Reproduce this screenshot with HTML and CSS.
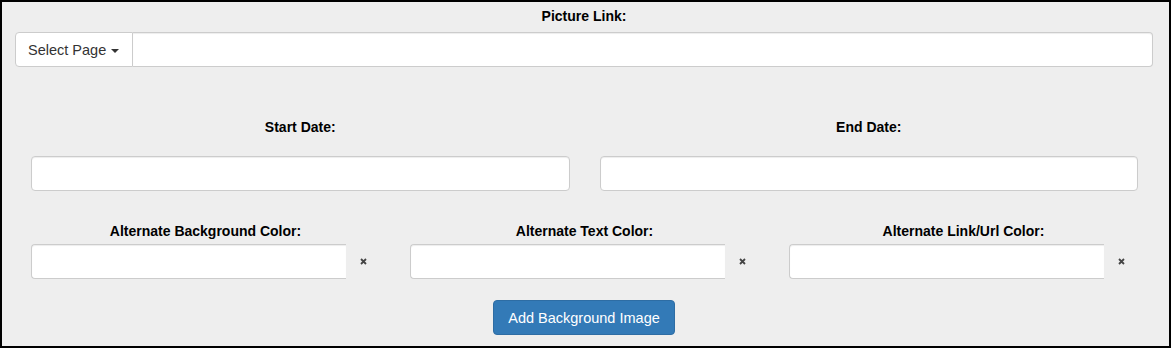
FILE: index.html
```html
<!DOCTYPE html>
<html lang="en">
<head>
    <meta charset="UTF-8">
    <title>Background Settings</title>
    <link rel="stylesheet" href="styles.css">
</head>
<body>
    <div class="panel">
        <div class="form-group top-group">
            <label class="field-label">Picture Link:</label>
            <div class="input-group">
                <button type="button" class="dropdown-btn">Select Page <span class="caret"></span></button>
                <input type="text" class="form-control joined">
            </div>
        </div>

        <div class="row two-cols dates">
            <div class="col">
                <label class="field-label">Start Date:</label>
                <input type="text" class="form-control">
            </div>
            <div class="col">
                <label class="field-label">End Date:</label>
                <input type="text" class="form-control">
            </div>
        </div>

        <div class="row three-cols colors">
            <div class="col">
                <label class="field-label small-gap">Alternate Background Color:</label>
                <div class="input-group">
                    <input type="text" class="form-control addon-left">
                    <span class="addon"><svg width="7" height="7" viewBox="0 0 7 7"><path d="M1 1L6 6M6 1L1 6" stroke="#444" stroke-width="1.8"/></svg></span>
                </div>
            </div>
            <div class="col">
                <label class="field-label small-gap">Alternate Text Color:</label>
                <div class="input-group">
                    <input type="text" class="form-control addon-left">
                    <span class="addon"><svg width="7" height="7" viewBox="0 0 7 7"><path d="M1 1L6 6M6 1L1 6" stroke="#444" stroke-width="1.8"/></svg></span>
                </div>
            </div>
            <div class="col">
                <label class="field-label small-gap">Alternate Link/Url Color:</label>
                <div class="input-group">
                    <input type="text" class="form-control addon-left">
                    <span class="addon"><svg width="7" height="7" viewBox="0 0 7 7"><path d="M1 1L6 6M6 1L1 6" stroke="#444" stroke-width="1.8"/></svg></span>
                </div>
            </div>
        </div>

        <div class="actions">
            <button type="button" class="btn-primary">Add Background Image</button>
        </div>
    </div>
</body>
</html>
```

FILE: styles.css
```css
html, body {
    margin: 0;
    padding: 0;
}
body {
    font-family: "Liberation Sans", Arial, sans-serif;
    font-size: 14px;
    line-height: 20px;
    color: #333;
}
.panel {
    box-sizing: border-box;
    width: 1171px;
    height: 348px;
    border: 2px solid #000;
    background-color: #eeeeee;
    padding: 4px 16px 0 13px;
}
.field-label {
    display: block;
    text-align: center;
    font-weight: bold;
    color: #000;
    margin-bottom: 6px;
}
.field-label.small-gap {
    margin-bottom: 3px;
}
.input-group {
    display: flex;
}
.form-control {
    display: block;
    box-sizing: border-box;
    width: 100%;
    height: 35px;
    padding: 6px 12px;
    font: inherit;
    color: #555;
    background-color: #fff;
    border: 1px solid #ccc;
    border-radius: 4px;
    box-shadow: inset 0 1px 1px rgba(0, 0, 0, 0.075);
    outline: none;
}
.dropdown-btn {
    flex: none;
    width: 118px;
    height: 35px;
    padding: 6px 12px;
    font: inherit;
    font-size: 14.5px;
    color: #333;
    text-align: left;
    background-color: #fff;
    border: 1px solid #ccc;
    border-radius: 4px 0 0 4px;
}
.caret {
    display: inline-block;
    width: 0;
    height: 0;
    margin-left: 1px;
    vertical-align: middle;
    border-top: 4px solid #333;
    border-left: 4px solid transparent;
    border-right: 4px solid transparent;
}
.form-control.joined {
    flex: 1;
    border-left: 0;
    border-radius: 0 4px 4px 0;
}
.row {
    display: grid;
    column-gap: 30px;
    padding: 0 15px 0 16px;
}
.two-cols {
    grid-template-columns: 1fr 1fr;
}
.three-cols {
    grid-template-columns: 1fr 1fr 1fr;
}
.dates {
    margin-top: 50px;
}
.dates .field-label {
    margin-bottom: 19px;
}
.colors {
    margin-top: 30px;
}
.form-control.addon-left {
    flex: 1;
    border-right: 0;
    border-radius: 4px 0 0 4px;
}
.addon {
    flex: none;
    width: 34px;
    display: flex;
    align-items: center;
    justify-content: center;
}
.actions {
    margin-top: 21px;
    text-align: center;
}
.btn-primary {
    height: 35px;
    padding: 6px 14px;
    font: inherit;
    font-size: 14.5px;
    color: #fff;
    background-color: #337ab7;
    border: 1px solid #2e6da4;
    border-radius: 4px;
    cursor: pointer;
}
```
